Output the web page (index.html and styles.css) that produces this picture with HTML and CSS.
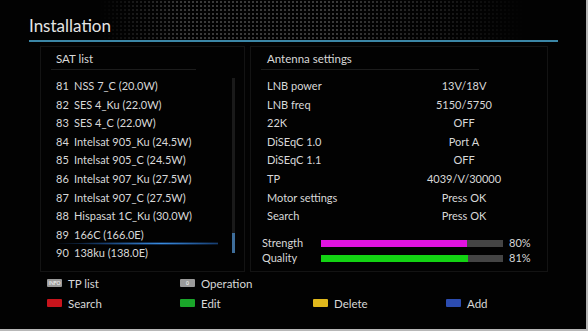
FILE: index.html
```html
<!DOCTYPE html>
<html lang="en">
<head>
    <meta charset="UTF-8">
    <title>Installation</title>
    <link rel="stylesheet" href="styles.css">
</head>
<body>
    <div class="screen">
        <div class="header">
            <div class="dots"></div>
            <h1>Installation</h1>
        </div>

        <div class="panels">
            <div class="panel sat-panel">
                <div class="panel-title">SAT list</div>
                <div class="sat-body">
                    <ul class="sat-list">
                        <li><span class="num">81</span>NSS 7_C (20.0W)</li>
                        <li><span class="num">82</span>SES 4_Ku (22.0W)</li>
                        <li><span class="num">83</span>SES 4_C (22.0W)</li>
                        <li><span class="num">84</span>Intelsat 905_Ku (24.5W)</li>
                        <li><span class="num">85</span>Intelsat 905_C (24.5W)</li>
                        <li><span class="num">86</span>Intelsat 907_Ku (27.5W)</li>
                        <li><span class="num">87</span>Intelsat 907_C (27.5W)</li>
                        <li><span class="num">88</span>Hispasat 1C_Ku (30.0W)</li>
                        <li class="selected"><span class="num">89</span>166C (166.0E)</li>
                        <li><span class="num">90</span>138ku (138.0E)</li>
                    </ul>
                    <div class="scrollbar"><div class="thumb"></div></div>
                </div>
            </div>

            <div class="panel antenna-panel">
                <div class="panel-title">Antenna settings</div>
                <div class="settings">
                    <div class="row"><span>LNB power</span><span>13V/18V</span></div>
                    <div class="row"><span>LNB freq</span><span>5150/5750</span></div>
                    <div class="row"><span>22K</span><span>OFF</span></div>
                    <div class="row"><span>DiSEqC 1.0</span><span>Port A</span></div>
                    <div class="row"><span>DiSEqC 1.1</span><span>OFF</span></div>
                    <div class="row"><span>TP</span><span>4039/V/30000</span></div>
                    <div class="row"><span>Motor settings</span><span>Press OK</span></div>
                    <div class="row"><span>Search</span><span>Press OK</span></div>
                </div>
                <div class="signal">
                    <div class="meter">
                        <span>Strength</span>
                        <div class="bar"><div class="fill strength" style="width: 80%"></div></div>
                        <span>80%</span>
                    </div>
                    <div class="meter">
                        <span>Quality</span>
                        <div class="bar"><div class="fill quality" style="width: 81%"></div></div>
                        <span>81%</span>
                    </div>
                </div>
            </div>
        </div>

        <div class="keys">
            <div class="key"><span class="btn grey">INFO</span>TP list</div>
            <div class="key"><span class="btn grey">0</span>Operation</div>
            <div class="key"></div>
            <div class="key"></div>
            <div class="key"><span class="btn red"></span>Search</div>
            <div class="key"><span class="btn green"></span>Edit</div>
            <div class="key"><span class="btn yellow"></span>Delete</div>
            <div class="key"><span class="btn blue"></span>Add</div>
        </div>
    </div>
</body>
</html>
```

FILE: styles.css
```css
body {
    margin: 0;
    background: #000;
    font-family: Lato, "Open Sans", sans-serif;
    color: #d8d8d8;
}

.screen {
    width: 586px;
    height: 329px;
    border-right: 2px solid #b8b8b8;
    border-bottom: 2px solid #b8b8b8;
    background: #020202;
    display: flex;
    flex-direction: column;
    overflow: hidden;
}

.header {
    position: relative;
    height: 40px;
    margin: 0 28px 0 29px;
    border-bottom: 2px solid #3b86a6;
}

.dots {
    position: absolute;
    left: 70px;
    right: 30px;
    top: 0;
    bottom: 0;
    background-image: radial-gradient(circle, #3a3a3a 0.9px, transparent 1.3px);
    background-size: 4px 4px;
    -webkit-mask-image: linear-gradient(90deg, transparent, #000 20%, #000 55%, transparent);
}

.header h1 {
    position: relative;
    margin: 0;
    padding-top: 15px;
    font-size: 17px;
    font-weight: normal;
    color: #e4e4e4;
}

.panels {
    display: flex;
    gap: 5px;
    margin: 4px 0 0 40px;
    height: 226px;
}

.panel {
    border: 1px solid #131313;
    box-sizing: border-box;
}

.sat-panel {
    width: 205px;
}

.antenna-panel {
    width: 298px;
    display: flex;
    flex-direction: column;
}

.panel-title {
    font-size: 11.5px;
    height: 20px;
    line-height: 20px;
    margin: 2px 0 0 10px;
    padding-left: 5px;
    border-bottom: 1px solid #1c1c1c;
    width: 140px;
}

.antenna-panel .panel-title {
    width: 212px;
    padding-left: 6px;
}

.sat-body {
    display: flex;
    margin-top: 7px;
}

.sat-list {
    list-style: none;
    margin: 0;
    padding: 0 0 0 15px;
    flex: 1;
    font-size: 11px;
}

.sat-list li {
    height: 18.6px;
    line-height: 18px;
    position: relative;
}

.num {
    display: inline-block;
    width: 18px;
}

.sat-list li.selected::after {
    content: "";
    position: absolute;
    left: 0;
    right: 14px;
    bottom: -1px;
    height: 3px;
    background: radial-gradient(ellipse at 65% 50%, #3a8ee0 0%, rgba(40, 110, 200, 0.6) 35%, transparent 72%);
}

.scrollbar {
    width: 3px;
    height: 175px;
    margin: 1px 9px 0 0;
    background: #1a1a1a;
    display: flex;
    flex-direction: column;
    justify-content: flex-end;
}

.thumb {
    height: 20px;
    background: #3e6d9a;
}

.settings {
    margin-top: 7px;
    padding-left: 16px;
    font-size: 11px;
}

.row {
    display: grid;
    grid-template-columns: 150px 94px;
    height: 18.6px;
    line-height: 18px;
}

.row span:last-child {
    text-align: center;
}

.signal {
    margin-top: auto;
    margin-bottom: 6px;
    padding-left: 11px;
    font-size: 11px;
}

.meter {
    display: flex;
    align-items: center;
    height: 15px;
}

.meter span:first-child {
    width: 59px;
}

.bar {
    width: 182px;
    height: 7px;
    background: #444;
    margin-right: 6px;
    margin-top: 1px;
}

.fill {
    height: 100%;
}

.fill.strength {
    background: #e213e0;
}

.fill.quality {
    background: #13d313;
}

.keys {
    display: grid;
    grid-template-columns: repeat(4, 133px);
    grid-auto-rows: 20px;
    margin: 1px 0 0 47px;
    font-size: 11.5px;
}

.key {
    display: flex;
    align-items: center;
}

.btn {
    width: 15px;
    height: 8px;
    margin-right: 6px;
    border-radius: 1px;
    font-size: 5px;
    line-height: 8px;
    text-align: center;
    color: #fff;
}

.btn.grey {
    background: #9a9a9a;
}

.btn.red {
    background: #c8141c;
}

.btn.green {
    background: #1aa62a;
}

.btn.yellow {
    background: #e0b81c;
}

.btn.blue {
    background: #2c4cb0;
}
```
